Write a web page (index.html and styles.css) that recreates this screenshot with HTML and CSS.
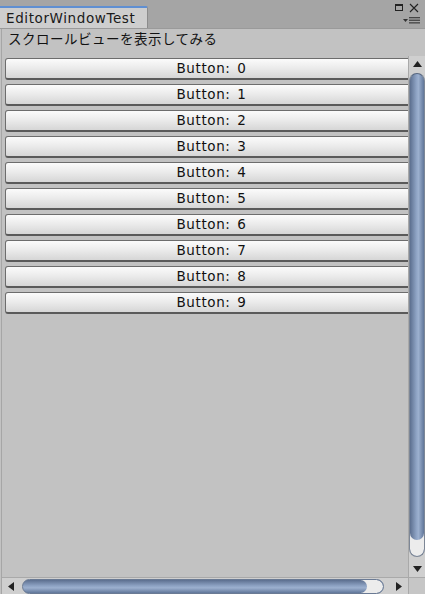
FILE: index.html
```html
<!DOCTYPE html>
<html>
<head>
<meta charset="utf-8">
<link rel="stylesheet" href="styles.css">
</head>
<body>
<div class="window">
  <div class="topbar">
    <div class="tab">EditorWindowTest</div>
    <div class="controls">
      <div class="ctl-row">
        <svg class="ico" width="8" height="8" viewBox="0 0 8 8"><rect x="0.5" y="0.5" width="7" height="6" fill="none" stroke="#222" stroke-width="1"/><rect x="0" y="0" width="8" height="2" fill="#222"/></svg>
        <svg class="ico" width="10" height="10" viewBox="0 0 10 10"><path d="M1 1 L9 9 M9 1 L1 9" stroke="#222" stroke-width="1.1"/></svg>
      </div>
      <svg class="menu" width="18" height="7" viewBox="0 0 18 7"><path d="M0 2 L5 2 L2.5 5 Z" fill="#333"/><rect x="6" y="0" width="11" height="1.3" fill="#444"/><rect x="6" y="2.6" width="11" height="1.3" fill="#444"/><rect x="6" y="5.2" width="11" height="1.3" fill="#444"/></svg>
    </div>
  </div>
  <div class="body">
    <div class="label">スクロールビューを表示してみる</div>
    <div class="scrollarea">
      <div class="viewport">
        <div class="btn">Button: 0</div>
        <div class="btn">Button: 1</div>
        <div class="btn">Button: 2</div>
        <div class="btn">Button: 3</div>
        <div class="btn">Button: 4</div>
        <div class="btn">Button: 5</div>
        <div class="btn">Button: 6</div>
        <div class="btn">Button: 7</div>
        <div class="btn">Button: 8</div>
        <div class="btn">Button: 9</div>
      </div>
      <div class="vscroll">
        <div class="arrow"><svg width="9" height="6" viewBox="0 0 9 6"><path d="M0 6 L4.5 0 L9 6 Z" fill="#222"/></svg></div>
        <div class="vtrack"><div class="vthumb"></div></div>
        <div class="arrow"><svg width="9" height="6" viewBox="0 0 9 6"><path d="M0 0 L4.5 6 L9 0 Z" fill="#222"/></svg></div>
      </div>
    </div>
    <div class="hrow">
      <div class="hscroll">
        <div class="harrow"><svg width="6" height="9" viewBox="0 0 6 9"><path d="M6 0 L0 4.5 L6 9 Z" fill="#222"/></svg></div>
        <div class="htrack"><div class="hthumb"></div></div>
        <div class="harrow"><svg width="6" height="9" viewBox="0 0 6 9"><path d="M0 0 L6 4.5 L0 9 Z" fill="#222"/></svg></div>
      </div>
      <div class="corner"></div>
    </div>
  </div>
</div>
</body>
</html>
```
FILE: styles.css
```css
html, body {
  margin: 0;
  padding: 0;
}
body {
  width: 425px;
  height: 594px;
  overflow: hidden;
  background: #c2c2c2;
  font-family: "DejaVu Sans", "Noto Sans CJK JP", sans-serif;
  color: #111;
}
.window {
  display: flex;
  flex-direction: column;
  height: 594px;
}
.topbar {
  height: 29px;
  background: #a5a5a5;
  display: flex;
  align-items: flex-end;
  border-bottom: 1px solid #9a9a9a;
  box-sizing: border-box;
}
.tab {
  width: 148px;
  height: 22px;
  background: #cecece;
  border-top: 2px solid #5f8fd2;
  border-right: 1px solid #8c8c8c;
  border-top-right-radius: 2px;
  font-size: 13.5px;
  letter-spacing: 0.6px;
  line-height: 20px;
  padding-left: 6px;
  box-sizing: border-box;
  color: #1a1a1a;
}
.controls {
  margin-left: auto;
  align-self: stretch;
  display: flex;
  flex-direction: column;
  align-items: flex-end;
  padding: 3px 6px 0 0;
  gap: 4px;
}
.ctl-row {
  display: flex;
  align-items: center;
  gap: 6px;
}
.menu {
  margin-right: -2px;
}
.body {
  flex: 1;
  display: flex;
  flex-direction: column;
  border-left: 1px solid #a6a6a6;
  margin-left: 1px;
}
.label {
  height: 27px;
  font-size: 13.5px;
  letter-spacing: 0.5px;
  line-height: 20px;
  padding-left: 6px;
  box-sizing: border-box;
}
.scrollarea {
  flex: 1;
  display: flex;
  min-height: 0;
}
.viewport {
  flex: 1;
  min-width: 0;
  overflow: hidden;
  padding: 2px 0 0 3px;
  display: flex;
  flex-direction: column;
  align-items: flex-start;
  gap: 4px;
}
.btn {
  width: 413px;
  flex-shrink: 0;
  height: 22px;
  box-sizing: border-box;
  border: 1px solid #6d6d6d;
  border-bottom: 2px solid #5a5a5a;
  border-radius: 3px;
  background: linear-gradient(#fbfbfb, #ececec 45%, #d6d6d6);
  text-align: center;
  font-size: 13.5px;
  letter-spacing: 0.6px;
  word-spacing: 2px;
  line-height: 19px;
  color: #111;
}
.vscroll {
  width: 16px;
  flex-shrink: 0;
  background: #cfcfcf;
  border-left: 1px solid #a9a9a9;
  display: flex;
  flex-direction: column;
}
.arrow {
  height: 16px;
  display: flex;
  align-items: center;
  justify-content: center;
}
.vtrack {
  flex: 1;
  padding: 1px 0 4px 0;
  display: flex;
}
.vthumb {
  flex: 1;
  border-radius: 8px;
  background: linear-gradient(90deg, #5c6f8f, #8ea3c4 45%, #9cb0cf 60%, #61779a);
  box-shadow: inset 0 -16px 0 0 #ececec;
  border: 1px solid #7d8796;
  border-top-color: #55657f;
}
.hrow {
  display: flex;
  height: 16px;
  border-top: 1px solid #a9a9a9;
}
.hscroll {
  flex: 1;
  display: flex;
  background: #cfcfcf;
}
.harrow {
  width: 18px;
  display: flex;
  align-items: center;
  justify-content: center;
}
.htrack {
  flex: 1;
  padding: 1px 6px 0 2px;
  display: flex;
}
.hthumb {
  flex: 1;
  border-radius: 8px;
  background: linear-gradient(#5c6f8f, #8ea3c4 45%, #9cb0cf 60%, #61779a);
  box-shadow: inset -16px 0 0 0 #ececec;
  border: 1px solid #6a7a94;
}
.corner {
  width: 16px;
  flex-shrink: 0;
  background: #c6c6c6;
  border-left: 1px solid #a9a9a9;
}
```
